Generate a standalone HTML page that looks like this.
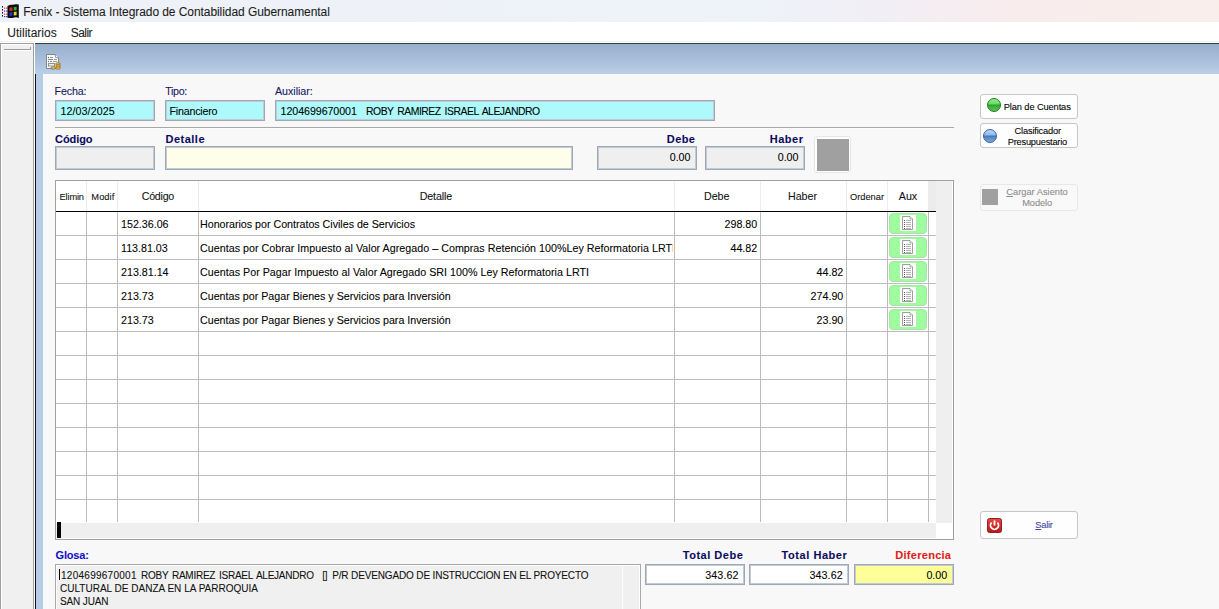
<!DOCTYPE html>
<html><head><meta charset="utf-8">
<style>
*{box-sizing:border-box;margin:0;padding:0}
html,body{width:1219px;height:609px;overflow:hidden;background:#f8f8f8;font-family:"Liberation Sans",sans-serif;color:#000}
.a{position:absolute}
.t{position:absolute;white-space:pre;line-height:1;-webkit-text-stroke:0.08px currentColor}
</style></head><body>
<div class="a" style="left:0px;top:0px;width:1219px;height:22px;background:linear-gradient(90deg,#eef1f7 0%,#eef2f9 62%,#f1eff5 72%,#f8ecee 82%,#f9eeea 100%)"></div>
<svg class="a" style="left:1px;top:3px" width="19" height="16" viewBox="0 0 19 16">
  <g fill="#111"><rect x="1" y="3" width="1" height="1.6"/><rect x="1" y="6" width="1" height="1.6"/><rect x="1" y="9" width="1" height="1.6"/><rect x="1" y="12" width="1" height="1.6"/></g>
  <g fill="#e03030"><rect x="3" y="4.5" width="3.5" height="1.2"/><rect x="3" y="10.5" width="3.5" height="1.2"/></g>
  <g fill="#2a3ad0"><rect x="3" y="7.5" width="3.5" height="1.2"/><rect x="3" y="13" width="3.5" height="1.2"/></g>
  <g fill="#fff"><rect x="4.3" y="4" width="0.8" height="11"/></g>
  <path d="M6.5 3 Q9 1.5 11.5 1.8 Q14 1 15.5 1.3 L17.8 1.5 L17.8 15 Q15.5 14 13.5 14.5 Q11 15.2 8.5 15 L6.5 14.8 Z" fill="#0e0e0e"/>
  <path d="M8.5 4.8 L11.5 4.2 L11.5 7.8 L8.5 8.3 Z" fill="#d42a2a"/>
  <path d="M12.8 4 L15.6 3.7 L15.6 7.3 L12.8 7.6 Z" fill="#30b040"/>
  <path d="M8.5 9.6 L11.5 9.1 L11.5 12.6 L8.5 13 Z" fill="#2233cc"/>
  <path d="M12.8 8.9 L15.6 8.6 L15.6 12.3 L12.8 12.5 Z" fill="#e8d82a"/>
</svg>
<div class="t" style="left:23.30px;top:6px;font-size:12px;color:#1c1c1c;letter-spacing:-0.068px;">Fenix - Sistema Integrado de Contabilidad Gubernamental</div>
<div class="a" style="left:0px;top:22px;width:1219px;height:21px;background:#fff"></div>
<div class="a" style="left:0px;top:41px;width:1219px;height:1px;background:#f3f3f3"></div>
<div class="t" style="left:7.30px;top:27px;font-size:12px;color:#1c1c1c;">Utilitarios</div>
<div class="t" style="left:70.80px;top:27px;font-size:12px;color:#1c1c1c;letter-spacing:-0.554px;">Salir</div>
<div class="a" style="left:0px;top:43px;width:34px;height:566px;background:#f0f0f0;border:1px solid #a0a0a0;border-bottom:none;box-shadow:inset 1px 1px 0 #fff"></div>
<div class="a" style="left:4px;top:49px;width:27px;height:1px;background:#9a9a9a"></div>
<div class="a" style="left:4px;top:50px;width:27px;height:1px;background:#fff"></div>
<div class="a" style="left:30px;top:47px;width:1px;height:3px;background:#9a9a9a"></div>
<div class="a" style="left:34px;top:43px;width:1px;height:566px;background:#fff"></div>
<div class="a" style="left:35px;top:43px;width:1184px;height:566px;background:#b7cde7;border-top:1px solid #333c48"></div>
<div class="a" style="left:35px;top:44px;width:1184px;height:30px;background:linear-gradient(180deg,#98afcc 0%,#a9bfda 55%,#bad0e7 100%)"></div>
<svg class="a" style="left:45px;top:53px" width="16" height="18" viewBox="0 0 16 18">
  <path d="M1.5 1.5 H10.5 L13.5 4.5 V15.5 H1.5 Z" fill="#f6f8f8" stroke="#7d8790" stroke-width="1"/>
  <path d="M10.5 1.5 V4.5 H13.5" fill="#fff" stroke="#7d8790" stroke-width="0.8"/>
  <rect x="3" y="4" width="1" height="1" fill="#555"/><rect x="5" y="4" width="3" height="1" fill="#999"/>
  <rect x="3" y="6" width="5" height="1" fill="#888"/><rect x="9" y="6" width="3" height="1" fill="#999"/>
  <rect x="3" y="8" width="1" height="1" fill="#666"/><rect x="5" y="8" width="2" height="1" fill="#888"/><rect x="8" y="8" width="4" height="1" fill="#999"/>
  <rect x="3.5" y="10.5" width="6" height="2.5" fill="#eef0ec" stroke="#8a9298" stroke-width="1"/>
  <ellipse cx="13" cy="11" rx="2.4" ry="1.2" fill="#f4c860" stroke="#8c6a1c" stroke-width="0.8"/>
  <ellipse cx="13" cy="13" rx="2.4" ry="1.2" fill="#f4c860" stroke="#8c6a1c" stroke-width="0.8"/>
  <ellipse cx="13" cy="15" rx="2.4" ry="1.2" fill="#f4c860" stroke="#8c6a1c" stroke-width="0.8"/>
  <ellipse cx="8.3" cy="15" rx="2.3" ry="1.2" fill="#f4c860" stroke="#8c6a1c" stroke-width="0.8"/>
</svg>
<div class="a" style="left:43px;top:74px;width:1176px;height:535px;background:#f8f8f8"></div>
<div class="a" style="left:35px;top:74px;width:1px;height:535px;background:#111"></div>
<div class="t" style="left:54.50px;top:86px;font-size:10.7px;color:#16165e;letter-spacing:-0.138px;">Fecha:</div>
<div class="t" style="left:165.30px;top:86px;font-size:10.7px;color:#16165e;letter-spacing:-0.344px;">Tipo:</div>
<div class="t" style="left:275.00px;top:86px;font-size:10.7px;color:#16165e;letter-spacing:-0.039px;">Auxiliar:</div>
<div class="a" style="left:55px;top:100px;width:100px;height:21px;border:1px solid #9ea8b5;box-shadow:inset 0 0 0 1px #c2cad4;background:#adf9fb"></div>
<div class="a" style="left:165px;top:100px;width:100px;height:21px;border:1px solid #9ea8b5;box-shadow:inset 0 0 0 1px #c2cad4;background:#adf9fb"></div>
<div class="a" style="left:275px;top:100px;width:440px;height:21px;border:1px solid #9ea8b5;box-shadow:inset 0 0 0 1px #c2cad4;background:#adf9fb"></div>
<div class="t" style="left:60.60px;top:106px;font-size:10.7px;color:#000;letter-spacing:0.056px;">12/03/2025</div>
<div class="t" style="left:169.50px;top:106px;font-size:10.7px;color:#000;letter-spacing:-0.212px;">Financiero</div>
<div class="t" style="left:280.60px;top:106px;font-size:10.7px;color:#000;letter-spacing:-0.082px;">1204699670001</div>
<div class="t" style="left:366.00px;top:107px;font-size:10.4px;color:#000;letter-spacing:-0.477px;word-spacing:1.5px;">ROBY RAMIREZ ISRAEL ALEJANDRO</div>
<div class="a" style="left:55px;top:127px;width:899px;height:1px;background:#a8a8a8"></div>
<div class="a" style="left:55px;top:128px;width:899px;height:1px;background:#fdfdfd"></div>
<div class="t" style="left:55.00px;top:134px;font-size:11px;color:#0b0b60;font-weight:bold;letter-spacing:-0.058px;">Código</div>
<div class="t" style="left:165.50px;top:134px;font-size:11px;color:#0b0b60;font-weight:bold;letter-spacing:0.487px;">Detalle</div>
<div class="t" style="left:666.80px;top:134px;font-size:11px;color:#0b0b60;font-weight:bold;letter-spacing:0.431px;">Debe</div>
<div class="t" style="left:769.70px;top:134px;font-size:11px;color:#0b0b60;font-weight:bold;letter-spacing:0.528px;">Haber</div>
<div class="a" style="left:55px;top:146px;width:100px;height:24px;border:1px solid #9ea8b5;box-shadow:inset 0 0 0 1px #c2cad4;background:#efefef"></div>
<div class="a" style="left:165px;top:146px;width:408px;height:24px;border:1px solid #9ea8b5;box-shadow:inset 0 0 0 1px #c2cad4;background:#fffeea"></div>
<div class="a" style="left:597px;top:146px;width:100px;height:24px;border:1px solid #9ea8b5;box-shadow:inset 0 0 0 1px #c2cad4;background:#efefef"></div>
<div class="a" style="left:705px;top:146px;width:100px;height:24px;border:1px solid #9ea8b5;box-shadow:inset 0 0 0 1px #c2cad4;background:#efefef"></div>
<div class="t" style="left:669.69px;top:152px;font-size:10.7px;color:#000;">0.00</div>
<div class="t" style="left:777.69px;top:152px;font-size:10.7px;color:#000;">0.00</div>
<div class="a" style="left:814px;top:136px;width:37px;height:37px;border:1px solid #e6e6e6;border-radius:3px;background:#fff"></div>
<div class="a" style="left:817px;top:139px;width:32px;height:32px;background:#a0a0a0"></div>
<div class="a" style="left:55px;top:180px;width:899px;height:360px;border:1px solid #a0a0a0;background:#fff"></div>
<div class="a" style="left:929px;top:181px;width:7px;height:30px;background:#ececec"></div>
<div class="a" style="left:936px;top:181px;width:16px;height:342px;background:#efefef"></div>
<div class="a" style="left:56px;top:523px;width:880px;height:15px;background:#efefef"></div>
<div class="a" style="left:57px;top:522px;width:4px;height:16px;background:#000"></div>
<div class="a" style="left:86px;top:181px;width:1px;height:30px;background:#ececec"></div>
<div class="a" style="left:117px;top:181px;width:1px;height:30px;background:#ececec"></div>
<div class="a" style="left:198px;top:181px;width:1px;height:30px;background:#ececec"></div>
<div class="a" style="left:674px;top:181px;width:1px;height:30px;background:#ececec"></div>
<div class="a" style="left:760px;top:181px;width:1px;height:30px;background:#ececec"></div>
<div class="a" style="left:846px;top:181px;width:1px;height:30px;background:#ececec"></div>
<div class="a" style="left:887px;top:181px;width:1px;height:30px;background:#ececec"></div>
<div class="a" style="left:928px;top:181px;width:1px;height:30px;background:#ececec"></div>
<div class="a" style="left:86px;top:212px;width:1px;height:310px;background:#bcbcbc"></div>
<div class="a" style="left:117px;top:212px;width:1px;height:310px;background:#bcbcbc"></div>
<div class="a" style="left:198px;top:212px;width:1px;height:310px;background:#bcbcbc"></div>
<div class="a" style="left:674px;top:212px;width:1px;height:310px;background:#bcbcbc"></div>
<div class="a" style="left:760px;top:212px;width:1px;height:310px;background:#bcbcbc"></div>
<div class="a" style="left:846px;top:212px;width:1px;height:310px;background:#bcbcbc"></div>
<div class="a" style="left:887px;top:212px;width:1px;height:310px;background:#bcbcbc"></div>
<div class="a" style="left:928px;top:212px;width:1px;height:310px;background:#bcbcbc"></div>
<div class="a" style="left:56px;top:211px;width:880px;height:1px;background:#000"></div>
<div class="a" style="left:56px;top:235px;width:880px;height:1px;background:#bcbcbc"></div>
<div class="a" style="left:56px;top:259px;width:880px;height:1px;background:#bcbcbc"></div>
<div class="a" style="left:56px;top:283px;width:880px;height:1px;background:#bcbcbc"></div>
<div class="a" style="left:56px;top:307px;width:880px;height:1px;background:#bcbcbc"></div>
<div class="a" style="left:56px;top:331px;width:880px;height:1px;background:#bcbcbc"></div>
<div class="a" style="left:56px;top:355px;width:880px;height:1px;background:#bcbcbc"></div>
<div class="a" style="left:56px;top:379px;width:880px;height:1px;background:#bcbcbc"></div>
<div class="a" style="left:56px;top:403px;width:880px;height:1px;background:#bcbcbc"></div>
<div class="a" style="left:56px;top:427px;width:880px;height:1px;background:#bcbcbc"></div>
<div class="a" style="left:56px;top:451px;width:880px;height:1px;background:#bcbcbc"></div>
<div class="a" style="left:56px;top:475px;width:880px;height:1px;background:#bcbcbc"></div>
<div class="a" style="left:56px;top:499px;width:880px;height:1px;background:#bcbcbc"></div>
<div class="t" style="left:59.60px;top:193px;font-size:9.3px;color:#111;letter-spacing:-0.183px;">Elimin</div>
<div class="t" style="left:91.35px;top:193px;font-size:9.3px;color:#111;letter-spacing:0.041px;">Modif</div>
<div class="t" style="left:141.75px;top:191px;font-size:10.7px;color:#111;letter-spacing:-0.275px;">Código</div>
<div class="t" style="left:419.70px;top:191px;font-size:10.7px;color:#111;letter-spacing:-0.114px;">Detalle</div>
<div class="t" style="left:704.05px;top:191px;font-size:10.7px;color:#111;letter-spacing:-0.087px;">Debe</div>
<div class="t" style="left:787.95px;top:191px;font-size:10.7px;color:#111;">Haber</div>
<div class="t" style="left:850.00px;top:193px;font-size:9.3px;color:#111;letter-spacing:-0.018px;">Ordenar</div>
<div class="t" style="left:898.85px;top:191px;font-size:10.7px;color:#111;letter-spacing:-0.061px;">Aux</div>
<div class="t" style="left:121.00px;top:219px;font-size:10.7px;color:#000;">152.36.06</div>
<div class="t" style="left:200.00px;top:219px;font-size:10.7px;color:#000;letter-spacing:-0.014px;width:473px;overflow:hidden;">Honorarios por Contratos Civiles de Servicios</div>
<div class="t" style="left:724.50px;top:219px;font-size:10.7px;color:#000;">298.80</div>
<div class="a" style="left:889px;top:213px;width:38px;height:21px;border-radius:4px;background:#a0fba0;border:1px solid #a4e6a4"></div>
<div class="a" style="left:900px;top:215px;width:16px;height:16px;background:#fff"></div>
<svg class="a" style="left:901px;top:215px" width="14" height="17" viewBox="0 0 14 17"><path d="M1.5 1.5 H9 L11.5 4 V14.5 H1.5 Z" fill="#fff" stroke="#858585" stroke-width="0.8"/><path d="M9 1.5 V4 H11.5" fill="#f4f4f4" stroke="#858585" stroke-width="0.6"/><rect x="3" y="5" width="1" height="1" fill="#555"/><rect x="4.8" y="5" width="5.2" height="1" fill="#b4b4b4"/><rect x="3" y="7" width="1" height="1" fill="#555"/><rect x="4.8" y="7" width="5.2" height="1" fill="#b4b4b4"/><rect x="3" y="9" width="1" height="1" fill="#555"/><rect x="4.8" y="9" width="5.2" height="1" fill="#b4b4b4"/><rect x="3" y="11" width="1" height="1" fill="#555"/><rect x="4.8" y="11" width="5.2" height="1" fill="#b4b4b4"/><rect x="3" y="13" width="1" height="1" fill="#555"/><rect x="4.8" y="13" width="5.2" height="1" fill="#b4b4b4"/></svg>
<div class="t" style="left:121.00px;top:243px;font-size:10.7px;color:#000;">113.81.03</div>
<div class="t" style="left:200.00px;top:243px;font-size:10.7px;color:#000;letter-spacing:0.028px;width:473px;overflow:hidden;">Cuentas por Cobrar Impuesto al Valor Agregado – Compras Retención 100%Ley Reformatoria LRTI</div>
<div class="t" style="left:730.45px;top:243px;font-size:10.7px;color:#000;">44.82</div>
<div class="a" style="left:889px;top:237px;width:38px;height:21px;border-radius:4px;background:#a0fba0;border:1px solid #a4e6a4"></div>
<div class="a" style="left:900px;top:239px;width:16px;height:16px;background:#fff"></div>
<svg class="a" style="left:901px;top:239px" width="14" height="17" viewBox="0 0 14 17"><path d="M1.5 1.5 H9 L11.5 4 V14.5 H1.5 Z" fill="#fff" stroke="#858585" stroke-width="0.8"/><path d="M9 1.5 V4 H11.5" fill="#f4f4f4" stroke="#858585" stroke-width="0.6"/><rect x="3" y="5" width="1" height="1" fill="#555"/><rect x="4.8" y="5" width="5.2" height="1" fill="#b4b4b4"/><rect x="3" y="7" width="1" height="1" fill="#555"/><rect x="4.8" y="7" width="5.2" height="1" fill="#b4b4b4"/><rect x="3" y="9" width="1" height="1" fill="#555"/><rect x="4.8" y="9" width="5.2" height="1" fill="#b4b4b4"/><rect x="3" y="11" width="1" height="1" fill="#555"/><rect x="4.8" y="11" width="5.2" height="1" fill="#b4b4b4"/><rect x="3" y="13" width="1" height="1" fill="#555"/><rect x="4.8" y="13" width="5.2" height="1" fill="#b4b4b4"/></svg>
<div class="t" style="left:121.00px;top:267px;font-size:10.7px;color:#000;">213.81.14</div>
<div class="t" style="left:200.00px;top:267px;font-size:10.7px;color:#000;letter-spacing:0.028px;width:473px;overflow:hidden;">Cuentas Por Pagar Impuesto al Valor Agregado SRI 100% Ley Reformatoria LRTI</div>
<div class="t" style="left:816.55px;top:267px;font-size:10.7px;color:#000;">44.82</div>
<div class="a" style="left:889px;top:261px;width:38px;height:21px;border-radius:4px;background:#a0fba0;border:1px solid #a4e6a4"></div>
<div class="a" style="left:900px;top:263px;width:16px;height:16px;background:#fff"></div>
<svg class="a" style="left:901px;top:263px" width="14" height="17" viewBox="0 0 14 17"><path d="M1.5 1.5 H9 L11.5 4 V14.5 H1.5 Z" fill="#fff" stroke="#858585" stroke-width="0.8"/><path d="M9 1.5 V4 H11.5" fill="#f4f4f4" stroke="#858585" stroke-width="0.6"/><rect x="3" y="5" width="1" height="1" fill="#555"/><rect x="4.8" y="5" width="5.2" height="1" fill="#b4b4b4"/><rect x="3" y="7" width="1" height="1" fill="#555"/><rect x="4.8" y="7" width="5.2" height="1" fill="#b4b4b4"/><rect x="3" y="9" width="1" height="1" fill="#555"/><rect x="4.8" y="9" width="5.2" height="1" fill="#b4b4b4"/><rect x="3" y="11" width="1" height="1" fill="#555"/><rect x="4.8" y="11" width="5.2" height="1" fill="#b4b4b4"/><rect x="3" y="13" width="1" height="1" fill="#555"/><rect x="4.8" y="13" width="5.2" height="1" fill="#b4b4b4"/></svg>
<div class="t" style="left:121.00px;top:291px;font-size:10.7px;color:#000;">213.73</div>
<div class="t" style="left:200.00px;top:291px;font-size:10.7px;color:#000;width:473px;overflow:hidden;">Cuentas por Pagar Bienes y Servicios para Inversión</div>
<div class="t" style="left:810.60px;top:291px;font-size:10.7px;color:#000;">274.90</div>
<div class="a" style="left:889px;top:285px;width:38px;height:21px;border-radius:4px;background:#a0fba0;border:1px solid #a4e6a4"></div>
<div class="a" style="left:900px;top:287px;width:16px;height:16px;background:#fff"></div>
<svg class="a" style="left:901px;top:287px" width="14" height="17" viewBox="0 0 14 17"><path d="M1.5 1.5 H9 L11.5 4 V14.5 H1.5 Z" fill="#fff" stroke="#858585" stroke-width="0.8"/><path d="M9 1.5 V4 H11.5" fill="#f4f4f4" stroke="#858585" stroke-width="0.6"/><rect x="3" y="5" width="1" height="1" fill="#555"/><rect x="4.8" y="5" width="5.2" height="1" fill="#b4b4b4"/><rect x="3" y="7" width="1" height="1" fill="#555"/><rect x="4.8" y="7" width="5.2" height="1" fill="#b4b4b4"/><rect x="3" y="9" width="1" height="1" fill="#555"/><rect x="4.8" y="9" width="5.2" height="1" fill="#b4b4b4"/><rect x="3" y="11" width="1" height="1" fill="#555"/><rect x="4.8" y="11" width="5.2" height="1" fill="#b4b4b4"/><rect x="3" y="13" width="1" height="1" fill="#555"/><rect x="4.8" y="13" width="5.2" height="1" fill="#b4b4b4"/></svg>
<div class="t" style="left:121.00px;top:315px;font-size:10.7px;color:#000;">213.73</div>
<div class="t" style="left:200.00px;top:315px;font-size:10.7px;color:#000;width:473px;overflow:hidden;">Cuentas por Pagar Bienes y Servicios para Inversión</div>
<div class="t" style="left:816.55px;top:315px;font-size:10.7px;color:#000;">23.90</div>
<div class="a" style="left:889px;top:309px;width:38px;height:21px;border-radius:4px;background:#a0fba0;border:1px solid #a4e6a4"></div>
<div class="a" style="left:900px;top:311px;width:16px;height:16px;background:#fff"></div>
<svg class="a" style="left:901px;top:311px" width="14" height="17" viewBox="0 0 14 17"><path d="M1.5 1.5 H9 L11.5 4 V14.5 H1.5 Z" fill="#fff" stroke="#858585" stroke-width="0.8"/><path d="M9 1.5 V4 H11.5" fill="#f4f4f4" stroke="#858585" stroke-width="0.6"/><rect x="3" y="5" width="1" height="1" fill="#555"/><rect x="4.8" y="5" width="5.2" height="1" fill="#b4b4b4"/><rect x="3" y="7" width="1" height="1" fill="#555"/><rect x="4.8" y="7" width="5.2" height="1" fill="#b4b4b4"/><rect x="3" y="9" width="1" height="1" fill="#555"/><rect x="4.8" y="9" width="5.2" height="1" fill="#b4b4b4"/><rect x="3" y="11" width="1" height="1" fill="#555"/><rect x="4.8" y="11" width="5.2" height="1" fill="#b4b4b4"/><rect x="3" y="13" width="1" height="1" fill="#555"/><rect x="4.8" y="13" width="5.2" height="1" fill="#b4b4b4"/></svg>
<div class="a" style="left:980px;top:94px;width:98px;height:25px;border:1px solid #c6c6c6;border-radius:3px;background:#fefefe;"></div>
<div class="a" style="left:987px;top:98px;width:14px;height:14px;border-radius:50%;background:linear-gradient(180deg,#90f08c 0%,#6ad866 42%,#2e9a2a 50%,#3aae36 62%,#58c654 100%);border:1px solid #1f7a1c"></div>
<div class="t" style="left:1003.80px;top:103px;font-size:9.3px;color:#000;letter-spacing:-0.125px;">Plan de Cuentas</div>
<div class="a" style="left:980px;top:123px;width:98px;height:25px;border:1px solid #c6c6c6;border-radius:3px;background:#fefefe;"></div>
<div class="a" style="left:983px;top:129px;width:14px;height:14px;border-radius:50%;background:linear-gradient(180deg,#b4d6f8 0%,#8cbaea 42%,#4274b6 50%,#5688c8 62%,#78a8de 100%);border:1px solid #3a629a"></div>
<div class="t" style="left:1014.60px;top:127px;font-size:9.3px;color:#000;letter-spacing:-0.198px;">Clasificador</div>
<div class="t" style="left:1007.80px;top:138px;font-size:9.3px;color:#000;letter-spacing:-0.242px;">Presupuestario</div>
<div class="a" style="left:980px;top:184px;width:98px;height:27px;border:1px solid #e8e8e8;border-radius:3px;background:#f9f9f9"></div>
<div class="a" style="left:982px;top:189px;width:16px;height:16px;background:#a0a0a0"></div>
<div class="t" style="left:1006.25px;top:188px;font-size:9.3px;color:#8c8c8c;"><u>C</u>argar Asiento</div>
<div class="t" style="left:1022.20px;top:199px;font-size:9.3px;color:#8c8c8c;letter-spacing:-0.100px;">Modelo</div>
<div class="a" style="left:980px;top:511px;width:98px;height:28px;border:1px solid #c6c6c6;border-radius:3px;background:#fefefe;"></div>
<svg class="a" style="left:987px;top:518px" width="15" height="15" viewBox="0 0 15 15">
  <defs><linearGradient id="pg" x1="0" y1="0" x2="0" y2="1"><stop offset="0" stop-color="#e84a44"/><stop offset="1" stop-color="#b41818"/></linearGradient></defs><rect x="0.5" y="0.5" width="14" height="14" rx="2" fill="url(#pg)" stroke="#9a1c1c"/>
  <path d="M4.6 4.6 A4 4 0 1 0 10.4 4.6" fill="none" stroke="#fff" stroke-width="1.8"/>
  <path d="M7.5 2.5 V7.5" stroke="#fff" stroke-width="1.8"/>
</svg>
<div class="t" style="left:1035.30px;top:521px;font-size:9.3px;color:#3a4aa0;letter-spacing:-0.252px;"><u>S</u>alir</div>
<div class="t" style="left:55.50px;top:550px;font-size:11px;color:#1212cc;font-weight:bold;letter-spacing:-0.167px;">Glosa:</div>
<div class="t" style="left:682.80px;top:550px;font-size:11px;color:#0b0b60;font-weight:bold;letter-spacing:0.509px;">Total Debe</div>
<div class="t" style="left:781.50px;top:550px;font-size:11px;color:#0b0b60;font-weight:bold;letter-spacing:0.560px;">Total Haber</div>
<div class="t" style="left:895.30px;top:550px;font-size:11px;color:#e01c1c;font-weight:bold;letter-spacing:0.277px;">Diferencia</div>
<div class="a" style="left:55px;top:564px;width:586px;height:45px;background:#f0f0f0;border:1px solid #a8a8a8;border-bottom:none;box-shadow:inset 1px 1px 0 #fff,inset -1px 0 0 #fff"></div>
<div class="a" style="left:622px;top:565px;width:1px;height:44px;background:#fbfbfb"></div>
<div class="t" style="left:61.00px;top:571px;font-size:10px;color:#111;letter-spacing:0.266px;">1204699670001</div>
<div class="t" style="left:141.00px;top:571px;font-size:10px;color:#111;letter-spacing:-0.242px;word-spacing:1.2px;">ROBY RAMIREZ ISRAEL ALEJANDRO</div>
<div class="t" style="left:322.20px;top:571px;font-size:10px;color:#111;letter-spacing:-0.162px;">[]</div>
<div class="t" style="left:332.20px;top:571px;font-size:10px;color:#111;letter-spacing:-0.142px;">P/R DEVENGADO DE INSTRUCCION EN EL PROYECTO</div>
<div class="t" style="left:60.00px;top:584px;font-size:10px;color:#111;letter-spacing:0.011px;">CULTURAL DE DANZA EN LA PARROQUIA</div>
<div class="t" style="left:60.00px;top:597px;font-size:10px;color:#111;letter-spacing:-0.136px;">SAN JUAN</div>
<div class="a" style="left:59px;top:569px;width:1px;height:11px;background:#000"></div>
<div class="a" style="left:645px;top:564px;width:100px;height:21px;border:1px solid #9ea8b5;box-shadow:inset 0 0 0 1px #c2cad4;background:#fff"></div>
<div class="a" style="left:749px;top:564px;width:100px;height:21px;border:1px solid #9ea8b5;box-shadow:inset 0 0 0 1px #c2cad4;background:#fff"></div>
<div class="a" style="left:854px;top:564px;width:100px;height:21px;border:1px solid #9ea8b5;box-shadow:inset 0 0 0 1px #c2cad4;background:#ffff99"></div>
<div class="t" style="left:705.20px;top:570px;font-size:10.7px;color:#000;letter-spacing:0.119px;">343.62</div>
<div class="t" style="left:809.40px;top:570px;font-size:10.7px;color:#000;letter-spacing:0.119px;">343.62</div>
<div class="t" style="left:926.39px;top:570px;font-size:10.7px;color:#000;">0.00</div>
</body></html>
